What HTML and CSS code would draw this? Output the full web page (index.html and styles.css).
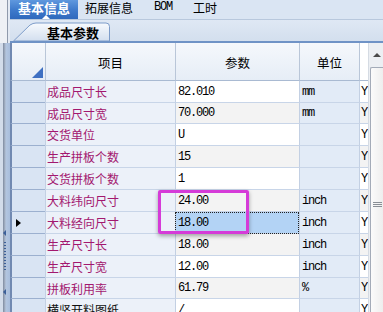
FILE: index.html
```html
<!DOCTYPE html>
<html>
<head>
<meta charset="utf-8">
<link rel="stylesheet" href="styles.css">
</head>
<body>
<div class="side">
  <div class="side-top"></div>
  <div class="side-bar">
    <span class="sp-tri"></span>
    <span class="sp-dots"></span>
    <span class="sp-tri sp-tri2"></span>
  </div>
</div>
<div class="main">
  <div class="tabbar">
    <div class="tab active"><span class="tab-text">基本信息</span><span class="tab-caret"></span></div>
    <div class="tab tab2">拓展信息</div>
    <div class="tab mono-tab">BOM</div>
    <div class="tab">工时</div>
  </div>
  <div class="substrip">
    <div class="subtab">
      <svg class="subtab-shape" width="100" height="21" viewBox="0 0 100 21">
        <defs>
          <linearGradient id="tg" x1="0" y1="0" x2="0" y2="1">
            <stop offset="0" stop-color="#f7fafd"/>
            <stop offset="1" stop-color="#d3dfef"/>
          </linearGradient>
        </defs>
        <path d="M3.5,21 L20,5 Q23,3 26,3 L96,3 Q99.5,3 99.5,6.5 L99.5,21 Z" fill="url(#tg)" stroke="#7d9cc9" stroke-width="1"/>
      </svg>
      <span class="subtab-text">基本参数</span>
    </div>
  </div>
  <div class="gridarea">
    <div class="grid">
      <div class="c ind hd"><svg width="11" height="11" viewBox="0 0 11 11"><polygon points="11,0 11,11 0,11" fill="#3f70c2"/></svg></div>
      <div class="c hd hc">项目</div>
      <div class="c hd hc">参数</div>
      <div class="c hd hc">单位</div>
      <div class="c hd yc"></div>

      <div class="c ind"></div><div class="c lb">成品尺寸长</div><div class="c vl mono">82.010</div><div class="c un mono">mm</div><div class="c yc mono">Y</div>
      <div class="c ind"></div><div class="c lb">成品尺寸宽</div><div class="c vl alt mono">70.000</div><div class="c un mono">mm</div><div class="c yc alt mono">Y</div>
      <div class="c ind"></div><div class="c lb">交货单位</div><div class="c vl mono">U</div><div class="c un mono"></div><div class="c yc mono">Y</div>
      <div class="c ind"></div><div class="c lb">生产拼板个数</div><div class="c vl alt mono">15</div><div class="c un mono"></div><div class="c yc alt mono">Y</div>
      <div class="c ind"></div><div class="c lb">交货拼板个数</div><div class="c vl mono">1</div><div class="c un mono"></div><div class="c yc mono">Y</div>
      <div class="c ind"></div><div class="c lb">大料纬向尺寸</div><div class="c vl alt mono">24.00</div><div class="c un mono">inch</div><div class="c yc alt mono">Y</div>
      <div class="c ind"><svg class="row-arrow" width="5" height="8" viewBox="0 0 5 8"><polygon points="0,0 5,4 0,8" fill="#000"/></svg></div><div class="c lb">大料经向尺寸</div><div class="c vl sel mono">18.00</div><div class="c un mono">inch</div><div class="c yc mono">Y</div>
      <div class="c ind"></div><div class="c lb">生产尺寸长</div><div class="c vl alt mono">18.00</div><div class="c un mono">inch</div><div class="c yc alt mono">Y</div>
      <div class="c ind"></div><div class="c lb">生产尺寸宽</div><div class="c vl mono">12.00</div><div class="c un mono">inch</div><div class="c yc mono">Y</div>
      <div class="c ind"></div><div class="c lb">拼板利用率</div><div class="c vl alt mono">61.79</div><div class="c un mono">%</div><div class="c yc alt mono">Y</div>
      <div class="c ind"></div><div class="c lb plain">横竖开料图纸</div><div class="c vl mono">/</div><div class="c un mono"></div><div class="c yc mono">Y</div>

      <div class="mark"></div>
    </div>
    <div class="vscroll">
      <div class="vs-top"><span class="vs-up"></span></div>
      <div class="vs-thumb"><span class="grip"></span></div>
    </div>
  </div>
</div>
</body>
</html>
```

FILE: styles.css
```css
* { box-sizing: border-box; margin: 0; padding: 0; }
html, body { width: 383px; height: 312px; overflow: hidden; }
body {
  font-family: "Noto Sans CJK SC", "Noto Sans", sans-serif;
  font-size: 12px;
  color: #000;
  background: #dae5f2;
  display: flex;
}

/* left splitter */
.side { width: 10px; display: flex; flex-direction: column; flex: none; }
.side-top {
  height: 43px;
  background: linear-gradient(to right, #eef1f5 0, #eef1f5 7px, #8f9aab 7px, #8f9aab 8px, #e3eaf3 8px);
}
.side-bar {
  flex: 1;
  background: linear-gradient(to right, #d2dcea 0, #d2dcea 3px, #7e8ba0 3px, #a6b3c6 5px, #b3c6e0 6px, #a7bddc 10px);
  display: flex;
  flex-direction: column;
  align-items: flex-start;
  padding-left: 3px;
}
.sp-tri {
  width: 0; height: 0;
  border-top: 3px solid transparent;
  border-bottom: 3px solid transparent;
  border-right: 3px solid #3b5f98;
  margin-top: 187px;
}
.sp-dots {
  width: 2px; height: 28px;
  margin-top: 6px;
  margin-left: 1px;
  background: repeating-linear-gradient(to bottom, #3b5f98 0 1px, transparent 1px 3px);
}
.sp-tri2 { margin-top: 19px; }

/* main */
.main { width: 373px; display: flex; flex-direction: column; flex: none; }

.tabbar {
  height: 20px;
  display: flex;
  align-items: flex-start;
  background: #dae5f3;
  border-bottom: 1px solid #b8c8dd;
  flex: none;
}
.tab {
  font-size: 12px;
  line-height: 13px;
  padding: 1px 10px 0 11px;
  white-space: nowrap;
}
.tab2 { padding-left: 9px; }
.tab.active {
  width: 68px;
  height: 19px;
  padding: 1px 0 0;
  margin-right: -2px;
  display: flex;
  flex-direction: column;
  align-items: center;
  background: linear-gradient(to bottom, #5f98de 0, #3f7bcc 50%, #2f69bd 100%);
  color: #fff;
}
.tab-text { font-size: 13px; font-weight: bold; line-height: 13px; }
.tab-caret {
  width: 0; height: 0;
  border-left: 4px solid transparent;
  border-right: 4px solid transparent;
  border-bottom: 4px solid #fff;
  margin-top: 1px;
  margin-left: 4px;
}
.mono-tab { font-family: "Liberation Mono", monospace; letter-spacing: -1.2px; }

.substrip {
  height: 23px;
  flex: none;
  background: linear-gradient(to bottom, #dfe8f4, #d3dfee);
  border-bottom: 2px solid #6f93c6;
  display: flex;
  align-items: flex-end;
}
.subtab {
  display: grid;
  width: 100px;
  height: 21px;
}
.subtab-shape, .subtab-text { grid-area: 1 / 1; }
.subtab-text {
  font-size: 13px;
  font-weight: bold;
  line-height: 13px;
  padding: 6px 0 0 37px;
}

/* grid */
.gridarea { flex: 1; display: flex; background: #fff; }
.grid {
  position: relative;
  width: 358px;
  flex: none;
  display: grid;
  grid-template-columns: 35px 130px 124px 60px 9px;
  grid-template-rows: 38px 22px 21px 22px 22px 22px 22px 22px 22px 22px 21px 22px;
  overflow: hidden;
}
.c {
  border-bottom: 1px solid #c8d5e8;
  border-left: 1px solid #c3d0e3;
  display: flex;
  align-items: center;
  white-space: nowrap;
  overflow: hidden;
}
.ind {
  border-left: 2px solid #7189b1;
  background: #d9e4f3;
  border-bottom-color: #9cb0cf;
  padding-left: 3px;
}
.hd {
  background: linear-gradient(to bottom, #f5f8fc, #e6edf6);
  border-bottom-color: #a9bad2;
  border-left-color: #b9c6d8;
}
.ind.hd {
  border-left-color: #7189b1;
  align-items: flex-end;
  justify-content: flex-end;
  padding: 0 2px 2px 0;
}
.hc { justify-content: center; font-size: 12.5px; padding-top: 1px; }
.lb {
  background: #ecf1f9;
  color: #a3176f;
  padding-left: 1px;
  font-size: 12px;
}
.lb.plain { color: #111; }
.vl { background: #fff; padding-left: 2px; }
.vl.alt, .yc.alt { background: #f3f3f3; }
.un { background: #e2ebf7; padding-left: 2px; }
.yc { background: #fff; padding-left: 1px; }
.mono {
  font-family: "Liberation Mono", monospace;
  font-size: 12px;
  letter-spacing: -1.2px;
}
.sel {
  background: #b3d3f5;
  outline: 1px dotted #222;
  outline-offset: -1px;
}
.row-arrow { margin-top: 1px; margin-left: 1px; }

.mark {
  position: absolute;
  left: 148px;
  top: 147px;
  width: 91px;
  height: 44px;
  border: 3px solid #d53bd8;
  border-radius: 2px;
  box-shadow: 0 2px 4px rgba(0, 0, 0, 0.35);
  pointer-events: none;
}

/* scrollbar */
.vscroll {
  flex: 1;
  background: #eceff3;
  display: flex;
  flex-direction: column;
  border-left: 1px solid #d5dbe3;
}
.vs-top {
  height: 24px;
  display: flex;
  justify-content: center;
  padding-top: 10px;
  padding-left: 2px;
}
.vs-up {
  width: 0; height: 0;
  border-left: 4px solid transparent;
  border-right: 4px solid transparent;
  border-bottom: 4px solid #4a4a4a;
}
.vs-thumb {
  height: 276px;
  margin-left: 1px;
  border: 1px solid #a3abb8;
  border-right: none;
  border-radius: 2px 0 0 2px;
  background: linear-gradient(to right, #fbfbfb, #eeeeee);
  display: flex;
  justify-content: center;
  padding-top: 134px;
}
.grip {
  width: 9px;
  height: 5px;
  background: repeating-linear-gradient(to bottom, #8a8f96 0 1px, transparent 1px 2px);
}
```
